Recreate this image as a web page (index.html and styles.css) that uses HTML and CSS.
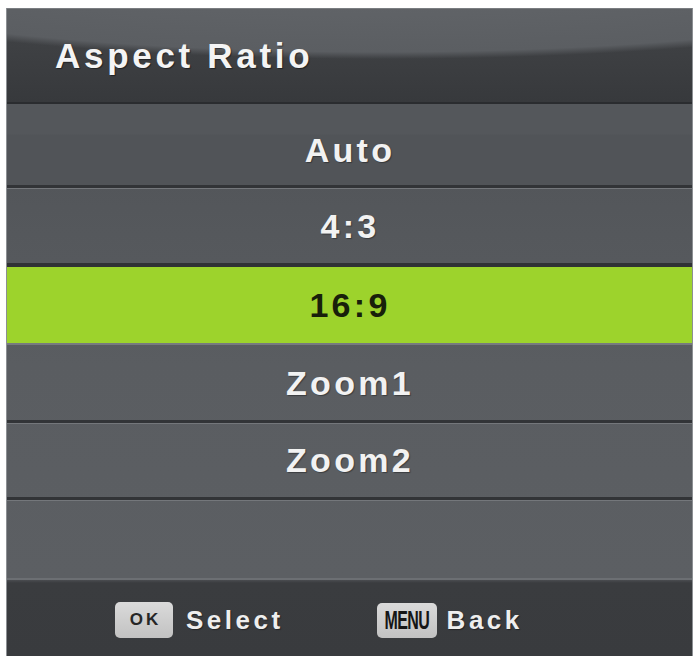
FILE: index.html
```html
<!DOCTYPE html>
<html lang="en">
<head>
<meta charset="utf-8">
<title>Aspect Ratio</title>
<link rel="stylesheet" href="styles.css">
</head>
<body>
<div class="panel">
  <div class="header">
    <h1 class="title">Aspect Ratio</h1>
  </div>
  <ul class="list">
    <li class="row row--first">Auto</li>
    <li class="row row--second">4:3</li>
    <li class="row row--active">16:9</li>
    <li class="row row--after-active">Zoom1</li>
    <li class="row row--fifth">Zoom2</li>
    <li class="row row--empty"></li>
  </ul>
  <div class="footer">
    <div class="hint">
      <span class="key key--ok">OK</span>
      <span class="hint-label">Select</span>
    </div>
    <div class="hint hint--back">
      <span class="key key--menu"><span class="key-menu-text">MENU</span></span>
      <span class="hint-label">Back</span>
    </div>
  </div>
</div>
</body>
</html>
```

FILE: styles.css
```css
html, body {
  margin: 0;
  padding: 0;
  background: #ffffff;
}

body {
  font-family: "Liberation Sans", Arial, sans-serif;
}

.panel {
  margin: 8px 0 0 6px;
  width: 687px;
  height: 648px;
  box-sizing: border-box;
  border-left: 1px solid #8c8f93;
  border-right: 1px solid #8c8f93;
  display: flex;
  flex-direction: column;
  background: #55585c;
}

.header {
  height: 96px;
  flex: none;
  box-sizing: border-box;
  border-top: 1px solid #7a7d81;
  border-bottom: 2px solid #2a2c2f;
  padding: 29px 0 0 48px;
  background:
    radial-gradient(ellipse 720px 118px at 374px -68px, #676a6e 0%, #5b5e62 94%, rgba(91, 94, 98, 0) 100%),
    linear-gradient(#434548, #37393c);
}

.title {
  margin: 0;
  font-size: 35px;
  line-height: 35px;
  font-weight: 700;
  letter-spacing: 3.7px;
  color: #f4f4f4;
  text-shadow: 1px 1px 1px rgba(0, 0, 0, 0.45);
}

.list {
  list-style: none;
  margin: 0;
  padding: 0;
  flex: none;
  background: linear-gradient(#505357, #5a5d61 55%, #5c5f63);
}

.row {
  box-sizing: border-box;
  display: flex;
  align-items: center;
  justify-content: center;
  padding-left: 1px;
  font-size: 34px;
  line-height: 34px;
  font-weight: 700;
  letter-spacing: 3.3px;
  color: #f2f2f2;
  text-shadow: 1px 1px 1px rgba(0, 0, 0, 0.35);
  border-top: 3px solid #323437;
  box-shadow: inset 0 1px 0 #74777b;
}

.row--first {
  height: 81px;
  padding-top: 11px;
  border-top: 0;
  box-shadow: none;
  background: linear-gradient(#54575b 0, #54575b 30px, #515458 31px, #515458);
}

.row--second {
  height: 78px;
}

.row--active {
  height: 80px;
  border-top: 4px solid #303235;
  box-shadow: none;
  background: #9dd32c;
  color: #18200a;
  text-shadow: none;
}

.row--after-active {
  height: 77px;
  border-top: 2px solid #777a7e;
  box-shadow: none;
}

.row--fifth {
  height: 77px;
}

.row--empty {
  height: 81px;
}

.footer {
  flex: 1;
  box-sizing: border-box;
  border-top: 2px solid #6c6f73;
  padding: 4px 0 0 108px;
  display: flex;
  align-items: center;
  background: linear-gradient(#4a4c50 0, #3a3c3f 3px, #393b3e);
}

.hint {
  display: flex;
  align-items: center;
  gap: 13px;
}

.hint--back {
  margin-left: 93px;
  gap: 10px;
}

.key {
  box-sizing: border-box;
  display: flex;
  align-items: center;
  justify-content: center;
  border-radius: 5px;
  background: linear-gradient(#dadada, #c2c2c2);
  color: #222222;
}

.key--ok {
  width: 58px;
  height: 36px;
  padding-left: 3px;
  font-size: 17px;
  font-weight: 700;
  letter-spacing: 3px;
  color: #262626;
}

.key--menu {
  width: 60px;
  height: 35px;
}

.key-menu-text {
  display: inline-block;
  font-size: 25px;
  line-height: 25px;
  font-weight: 700;
  letter-spacing: -1px;
  color: #161616;
  transform: scaleX(0.64);
}

.hint-label {
  font-size: 26px;
  line-height: 26px;
  font-weight: 700;
  letter-spacing: 3.5px;
  color: #eeeeee;
  text-shadow: 1px 1px 1px rgba(0, 0, 0, 0.4);
}
```
